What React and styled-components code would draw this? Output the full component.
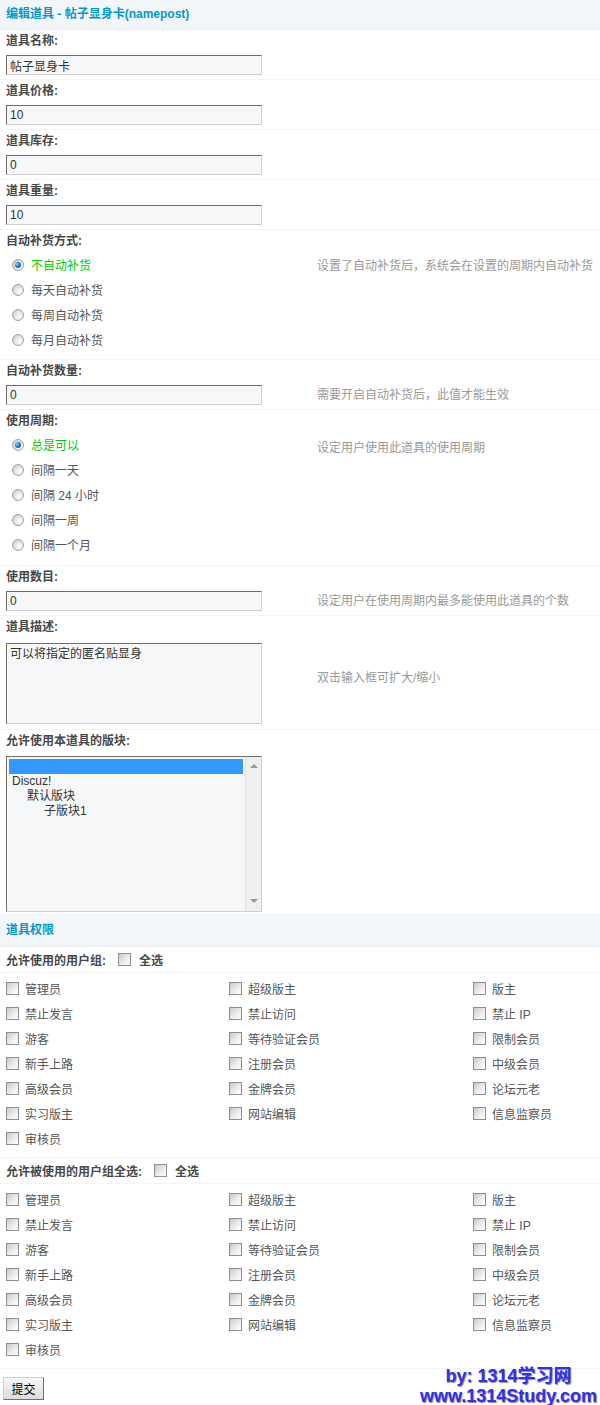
import React from 'react'
import styled, { createGlobalStyle, css } from 'styled-components'

const line = '#deeffb'
const font = `"Liberation Sans", "Noto Sans CJK SC", sans-serif`

const GlobalStyle = createGlobalStyle`
  body {
    margin: 0;
    background: #fff;
    font: 12px ${font};
    color: #555;
  }
`

const Page = styled.div`
  position: relative;
  width: 600px;
  min-height: 1405px;
`

const Title = styled.div`
  height: ${p => p.$h || 29}px;
  line-height: ${p => p.$h || 29}px;
  padding-left: 6px;
  background: #f3f6f9;
  color: #09c;
  font-weight: bold;
  border-bottom: 1px dotted ${line};
`

const Row = styled.div`
  padding: 3px 6px ${p => p.$pb ?? 4}px;
  border-bottom: 1px dotted ${line};
`

const Label = styled.div`
  line-height: 16px;
  font-weight: bold;
  color: #484848;
`

const Field = styled.div`
  display: flex;
  align-items: ${p => p.$top ? 'flex-start' : 'center'};
  margin-top: ${p => p.$gap ?? 6}px;
`

const Control = styled.div`
  width: 311px;
  flex-shrink: 0;
`

const Tip = styled.div`
  color: #999;
  line-height: 16px;
  margin-top: ${p => p.$offset || 0}px;
  white-space: nowrap;
`

const boxBorder = css`
  box-sizing: border-box;
  border: 1px solid;
  border-color: #6e6e6e #cfcfcf #cfcfcf #6e6e6e;
  background: #f6f7f9;
`

const TextInput = styled.input`
  ${boxBorder};
  display: block;
  width: 256px;
  height: 20px;
  padding: 0 3px;
  font: 12px ${font};
  color: #333;
  outline: none;
`

const TextArea = styled.textarea`
  ${boxBorder};
  display: block;
  width: 256px;
  height: 81px;
  padding: 2px 3px;
  font: 12px/16px ${font};
  color: #333;
  resize: none;
  outline: none;
`

const RadioList = styled.div`
  margin-top: 3px;
`

const RadioItem = styled.div`
  display: flex;
  align-items: center;
  height: 25px;
  padding-left: 6px;
  gap: 7px;
  color: ${p => p.$on ? '#00cc00' : '#555'};
`

const RadioDot = styled.span`
  position: relative;
  width: 12px;
  height: 12px;
  border-radius: 50%;
  box-sizing: border-box;
  border: 1px solid #a2a2a2;
  background: radial-gradient(circle at 65% 65%, #ffffff 0, #e6e6e6 45%, #c2c2c2 100%);
  flex-shrink: 0;
  ${p => p.$on && css`
    &::after {
      content: '';
      position: absolute;
      left: 2px;
      top: 2px;
      width: 6px;
      height: 6px;
      border-radius: 50%;
      background: radial-gradient(circle at 35% 35%, #8fd3f6 0, #1d7dbd 45%, #0a4a7e 100%);
    }
  `}
`

const ListBox = styled.div`
  ${boxBorder};
  display: flex;
  width: 256px;
  height: 156px;
`

const Options = styled.div`
  flex: 1;
  padding: 2px;
`

const Option = styled.div`
  height: 15px;
  line-height: 15px;
  padding-left: ${p => p.$indent || 3}px;
  color: #333;
  background: ${p => p.$selected ? '#3399ff' : 'transparent'};
  white-space: pre;
`

const ScrollBar = styled.div`
  width: 16px;
  display: flex;
  flex-direction: column;
  justify-content: space-between;
  align-items: center;
  padding: 7px 0 8px;
  box-sizing: border-box;
  background: #efefef;
  border-left: 1px solid #e2e2e2;
`

const Arrow = styled.span`
  width: 0;
  height: 0;
  border-left: 4px solid transparent;
  border-right: 4px solid transparent;
  ${p => p.$down
    ? css`border-top: 4px solid #9a9a9a;`
    : css`border-bottom: 4px solid #9a9a9a;`}
`

const GroupHead = styled.div`
  display: flex;
  align-items: center;
  height: 25px;
  padding: 0 6px;
  font-weight: bold;
  color: #484848;
  border-bottom: 1px dotted ${line};
`

const HeadBox = styled.span`
  display: flex;
  align-items: center;
  gap: 8px;
  margin-left: 12px;
`

const Grid = styled.div`
  display: grid;
  grid-template-columns: 223px 244px 1fr;
  padding: 3px 0 6px;
  border-bottom: 1px dotted ${line};
`

const CheckItem = styled.div`
  display: flex;
  align-items: center;
  gap: 6px;
  height: 25px;
  padding-left: 6px;
  color: #555;
`

const Box = styled.span`
  width: 13px;
  height: 13px;
  box-sizing: border-box;
  border: 1px solid #8e8e8e;
  background: linear-gradient(135deg, #c9c9c9 0, #ececec 55%, #ffffff 100%);
  flex-shrink: 0;
`

const Footer = styled.div`
  padding: 8px 3px;
`

const Submit = styled.button`
  width: 41px;
  height: 23px;
  padding: 0;
  font: 12px ${font};
  color: #000;
  background: linear-gradient(#f7f7f7, #dcdcdc);
  border: 1px solid;
  border-color: #d0d0d0 #707070 #707070 #d0d0d0;
`

const Watermark = styled.div`
  position: absolute;
  right: 3px;
  bottom: 2px;
  text-align: center;
  font: bold 18px/20px ${font};
  color: #3030f0;
  text-shadow: 1px 1px 1px #8a8a8a;
  white-space: nowrap;
`

const groups = [
  '管理员', '超级版主', '版主',
  '禁止发言', '禁止访问', '禁止 IP',
  '游客', '等待验证会员', '限制会员',
  '新手上路', '注册会员', '中级会员',
  '高级会员', '金牌会员', '论坛元老',
  '实习版主', '网站编辑', '信息监察员',
  '审核员',
]

const InputRow = ({ label, value, tip }) => (
  <Row>
    <Label>{label}</Label>
    <Field>
      <Control><TextInput defaultValue={value} /></Control>
      {tip && <Tip>{tip}</Tip>}
    </Field>
  </Row>
)

const RadioRow = ({ label, options, tip, pb, tipOffset }) => (
  <Row $pb={pb}>
    <Label>{label}</Label>
    <Field $top $gap={0}>
      <Control>
        <RadioList>
          {options.map((o, i) => (
            <RadioItem key={o} $on={i === 0}>
              <RadioDot $on={i === 0} />
              {o}
            </RadioItem>
          ))}
        </RadioList>
      </Control>
      <Tip $offset={tipOffset}>{tip}</Tip>
    </Field>
  </Row>
)

const GroupGrid = () => (
  <Grid>
    {groups.map(g => (
      <CheckItem key={g}>
        <Box />
        {g}
      </CheckItem>
    ))}
  </Grid>
)

export default function App() {
  return (
    <Page>
      <GlobalStyle />
      <Title>编辑道具 - 帖子显身卡(namepost)</Title>

      <InputRow label="道具名称:" value="帖子显身卡" />
      <InputRow label="道具价格:" value="10" />
      <InputRow label="道具库存:" value="0" />
      <InputRow label="道具重量:" value="10" />

      <RadioRow
        label="自动补货方式:"
        options={['不自动补货', '每天自动补货', '每周自动补货', '每月自动补货']}
        tip="设置了自动补货后，系统会在设置的周期内自动补货"
        pb={7}
        tipOffset={9}
      />

      <InputRow label="自动补货数量:" value="0" tip="需要开启自动补货后，此值才能生效" />

      <RadioRow
        label="使用周期:"
        options={['总是可以', '间隔一天', '间隔 24 小时', '间隔一周', '间隔一个月']}
        tip="设定用户使用此道具的使用周期"
        pb={8}
        tipOffset={11}
      />

      <InputRow label="使用数目:" value="0" tip="设定用户在使用周期内最多能使用此道具的个数" />

      <Row $pb={5}>
        <Label>道具描述:</Label>
        <Field $top $gap={8}>
          <Control><TextArea defaultValue="可以将指定的匿名贴显身" /></Control>
          <Tip $offset={27}>双击输入框可扩大/缩小</Tip>
        </Field>
      </Row>

      <Row $pb={2}>
        <Label>允许使用本道具的版块:</Label>
        <Field $gap={7}>
          <ListBox>
            <Options>
              <Option $selected>{' '}</Option>
              <Option>Discuz!</Option>
              <Option $indent={18}>默认版块</Option>
              <Option $indent={35}>子版块1</Option>
            </Options>
            <ScrollBar>
              <Arrow />
              <Arrow $down />
            </ScrollBar>
          </ListBox>
        </Field>
      </Row>

      <Title $h={31}>道具权限</Title>

      <GroupHead>
        允许使用的用户组:
        <HeadBox><Box />全选</HeadBox>
      </GroupHead>
      <GroupGrid />

      <GroupHead>
        允许被使用的用户组全选:
        <HeadBox><Box />全选</HeadBox>
      </GroupHead>
      <GroupGrid />

      <Footer>
        <Submit>提交</Submit>
      </Footer>

      <Watermark>
        by: 1314学习网
        <br />
        www.1314Study.com
      </Watermark>
    </Page>
  )
}
